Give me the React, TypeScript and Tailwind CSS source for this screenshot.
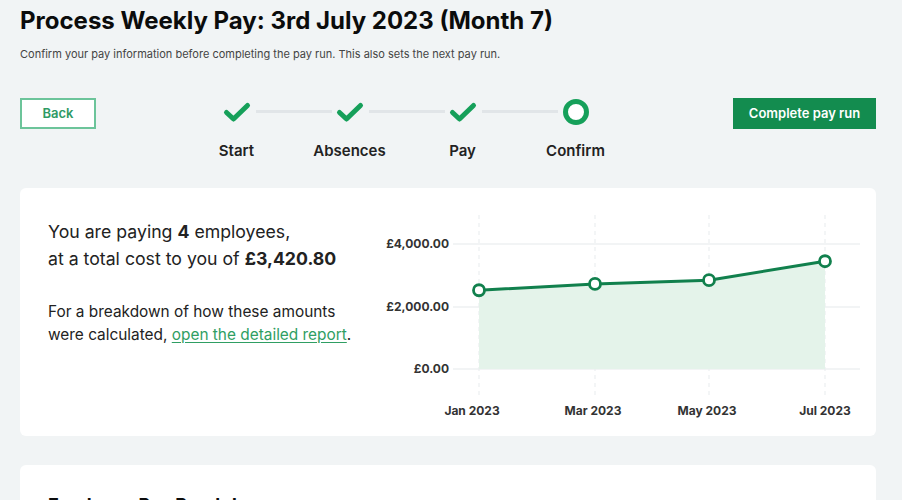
import React from "react";

const Check = () => (
  <svg width="30" height="30" viewBox="0 0 30 30">
    <path d="M4.5 15.5 L11.5 22 L25.5 8.5" fill="none" stroke="#16a05a" strokeWidth="5" strokeLinecap="round" strokeLinejoin="round" />
  </svg>
);

const Ring = () => (
  <svg width="30" height="30" viewBox="0 0 30 30">
    <circle cx="15" cy="15" r="10.5" fill="#ffffff" stroke="#16a05a" strokeWidth="5" />
  </svg>
);

const steps = [
  { label: "Start", done: true },
  { label: "Absences", done: true },
  { label: "Pay", done: true },
  { label: "Confirm", done: false },
];

function Stepper() {
  return (
    <div className="flex">
      {steps.map((s, i) => (
        <div key={s.label} className="relative flex w-[113px] flex-col items-center">
          {i < steps.length - 1 && (
            <div className="absolute left-[76px] top-[13px] h-[3px] w-[76px] bg-[#e1e5e8]" />
          )}
          <div className="relative z-10 flex h-[29px] items-center">{s.done ? <Check /> : <Ring />}</div>
          <div className="mt-[14px] text-[15px] font-semibold text-[#222]">{s.label}</div>
        </div>
      ))}
    </div>
  );
}

function Chart() {
  // svg origin at absolute (376, 188)
  const ox = 376;
  const oy = 188;
  const xs = [479, 595, 709, 825].map((x) => x - ox);
  const vals = [2500, 2700, 2820, 3420.8];
  const y0 = 369 - oy;
  const per = 63 / 2000;
  const ys = vals.map((v) => y0 - v * per);
  const line = xs.map((x, i) => `${i === 0 ? "M" : "L"}${x} ${ys[i]}`).join(" ");
  const area = `${line} L${xs[3]} ${y0} L${xs[0]} ${y0} Z`;
  const gridY = [
    { v: "£4,000.00", y: 244 - oy },
    { v: "£2,000.00", y: 307 - oy },
    { v: "£0.00", y: y0 },
  ];
  const labels = ["Jan 2023", "Mar 2023", "May 2023", "Jul 2023"];
  return (
    <svg width="490" height="248" viewBox="0 0 490 248" className="block">
      {gridY.map((g) => (
        <line key={g.v} x1={453 - ox} x2={860 - ox} y1={g.y} y2={g.y} stroke="#eef0f2" strokeWidth="1.5" />
      ))}
      {xs.map((x) => (
        <line key={x} x1={x} x2={x} y1={215 - oy} y2={395 - oy} stroke="#eceef0" strokeWidth="1.2" strokeDasharray="4 4" />
      ))}
      <path d={area} fill="#e4f3ea" />
      <path d={line} fill="none" stroke="#11804d" strokeWidth="3" strokeLinejoin="round" />
      {xs.map((x, i) => (
        <circle key={x} cx={x} cy={ys[i]} r="5.5" fill="#ffffff" stroke="#11804d" strokeWidth="2.8" />
      ))}
      {gridY.map((g) => (
        <text
          key={g.v + "t"}
          x={449 - ox}
          y={g.y + 4}
          textAnchor="end"
          fontSize="12"
          fontWeight="700"
          fill="#333"
          fontFamily="Inter, sans-serif"
        >
          {g.v}
        </text>
      ))}
      {labels.map((l, i) => (
        <text
          key={l}
          x={xs[i] - (i === 0 ? 7 : i === 3 ? 0 : 2)}
          y={415 - oy}
          textAnchor="middle"
          fontSize="12"
          fontWeight="700"
          fill="#333"
          fontFamily="Inter, sans-serif"
        >
          {l}
        </text>
      ))}
    </svg>
  );
}

export default function App() {
  return (
    <div className="h-[500px] overflow-hidden bg-[#f1f4f5] pl-5 pr-[26px] pt-[6px] text-[#222]" style={{ fontFamily: "Inter, 'Noto Sans', sans-serif" }}>
      <h1 className="text-[24px] font-bold leading-[30px] text-[#0b0c0c]">
        Process Weekly Pay: 3rd July 2023 (Month 7)
      </h1>
      <p className="mt-[10px] text-[11px] leading-[16px] text-[#444]">
        Confirm your pay information before completing the pay run. This also sets the next pay run.
      </p>

      <div className="mt-[35px] flex items-start justify-between">
        <button className="mt-[1px] h-[31px] w-[76px] border-2 border-[#6cc49a] bg-white text-[13px] font-semibold text-[#2e9a64]">
          Back
        </button>
        <div className="ml-[84px]">
          <Stepper />
        </div>
        <button className="mt-[1px] ml-auto h-[31px] w-[143px] bg-[#138c4f] text-[13px] font-semibold text-white">
          Complete pay run
        </button>
      </div>

      <div className="mt-[25px] flex h-[248px] rounded-md bg-white">
        <div className="w-[356px] pl-7 pt-[30px]">
          <p className="text-[17.7px] leading-[27px] text-[#222]">
            You are paying <b className="font-bold">4</b> employees,
            <br />
            at a total cost to you of <b className="font-bold">£3,420.80</b>
          </p>
          <p className="mt-[28px] text-[15.4px] leading-[23px] text-[#222]">
            For a breakdown of how these amounts
            <br />
            were calculated,{" "}
            <a href="#" className="text-[#2f9e63] underline underline-offset-2">
              open the detailed report
            </a>
            .
          </p>
        </div>
        <Chart />
      </div>

      <div className="mt-[29px] h-[60px] rounded-md bg-white pl-7 pt-[26px]">
        <h2 className="text-[18px] font-bold text-[#0b0c0c]">Employee Pay Breakdown</h2>
      </div>
    </div>
  );
}
